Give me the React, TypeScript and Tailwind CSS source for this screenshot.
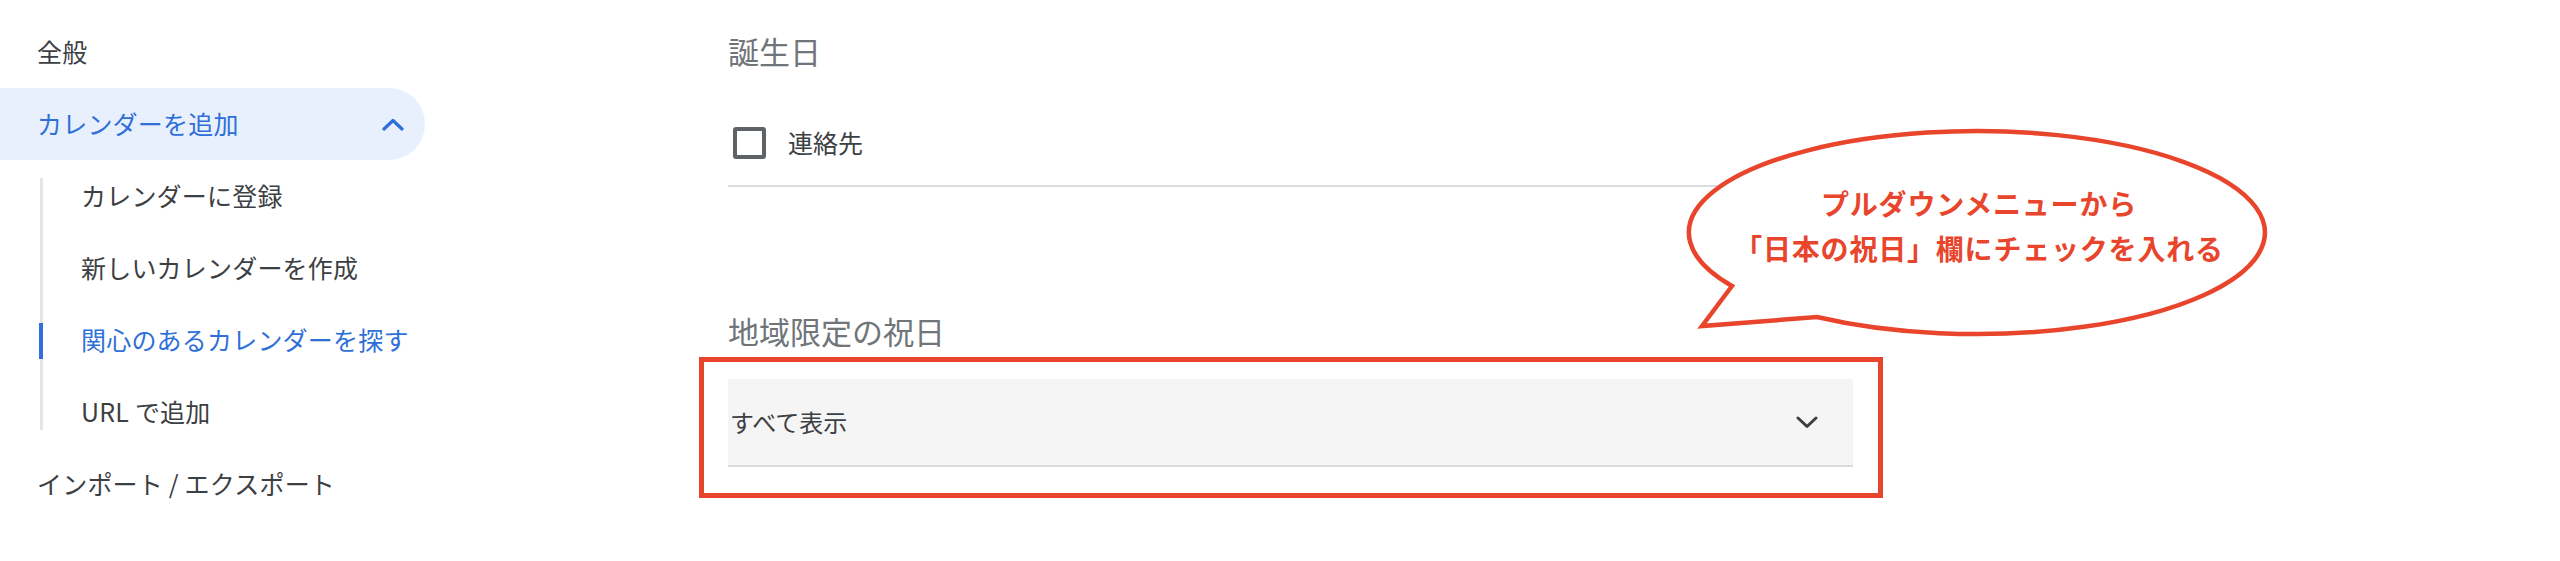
import React from "react";

const FONT = { fontFamily: '"Noto Sans CJK JP", "Noto Sans", Roboto, sans-serif' };

function ChevronUp() {
  return (
    <svg width="22" height="13" viewBox="0 0 22 13" fill="none">
      <path d="M2 11 L11 2.5 L20 11" stroke="#2f6fd8" strokeWidth="3.2" strokeLinecap="round" strokeLinejoin="round" />
    </svg>
  );
}

function ChevronDown() {
  return (
    <svg width="22" height="13" viewBox="0 0 22 13" fill="none">
      <path d="M2 2 L11 10.5 L20 2" stroke="#3c4043" strokeWidth="3" strokeLinecap="round" strokeLinejoin="round" />
    </svg>
  );
}

function Sidebar() {
  const sub = [
    { label: "カレンダーに登録", active: false },
    { label: "新しいカレンダーを作成", active: false },
    { label: "関心のあるカレンダーを探す", active: true },
    { label: "URL で追加", active: false },
  ];
  return (
    <div className="w-[425px] shrink-0 pt-[16px] text-[25px] text-[#3c4043] tracking-[0.2px]">
      <div className="h-[72px] pl-[37px] flex items-center">全般</div>
      <div className="h-[72px] pl-[37px] pr-[21px] flex items-center justify-between rounded-r-full bg-[#e8f0fe] text-[#2f6fd8]">
        <span>カレンダーを追加</span>
        <ChevronUp />
      </div>
      <div className="relative">
        <div className="absolute left-[40px] top-[18px] bottom-[18px] w-[3px] bg-[#e3e5e9]" />
        {sub.map((s) => (
          <div
            key={s.label}
            className={
              "relative h-[72px] pl-[81px] flex items-center " +
              (s.active ? "text-[#2f6fd8]" : "")
            }
          >
            {s.active && (
              <div className="absolute left-[39px] top-[19px] h-[36px] w-[4px] bg-[#2f6fd8]" />
            )}
            {s.label}
          </div>
        ))}
      </div>
      <div className="h-[72px] pl-[37px] flex items-center">インポート / エクスポート</div>
    </div>
  );
}

function Main() {
  return (
    <div className="flex-1 pl-[303px] pt-[31px]">
      <div className="w-[1125px]">
        <div className="h-[40px] leading-[40px] text-[31px] text-[#70757a]">誕生日</div>
        <div className="mt-[36px] h-[72px] flex items-center pl-[5px]">
          <div className="w-[33px] h-[32px] border-[4px] border-[#5f6368] rounded-[3px]" />
          <span className="ml-[22px] text-[25px] text-[#3c4043]">連絡先</span>
        </div>
        <div className="mt-[6px] h-[2px] bg-[#dadce0]" />
        <div className="mt-[124px] h-[40px] leading-[40px] text-[31px] text-[#70757a]">地域限定の祝日</div>
        <div className="relative mt-[28px]">
          <div className="h-[88px] bg-[#f5f5f5] border-b-[2px] border-[#dadce0] flex items-center justify-between pl-[2px] pr-[35px]">
            <span className="text-[24px] text-[#3c4043]">すべて表示</span>
            <ChevronDown />
          </div>
          <div className="absolute left-[-29px] top-[-22px] right-[-30px] bottom-[-31px] border-[5px] border-[#e8452c] pointer-events-none" />
        </div>
      </div>
    </div>
  );
}

function Bubble() {
  return (
    <>
      <svg
        className="absolute left-0 top-0 pointer-events-none"
        width="2560"
        height="561"
        viewBox="0 0 2560 561"
      >
        <path
          d="M1732 286 L1702 326 L1817 317 A288 101.5 0 1 0 1732 286 Z"
          fill="#ffffff"
          stroke="#e8452c"
          strokeWidth="4.5"
          strokeLinejoin="miter"
        />
      </svg>
      <div className="absolute left-[1679px] top-[181px] w-[600px] text-center text-[28px] leading-[45px] font-bold text-[#e8452c] tracking-[0.8px]">
        <div>プルダウンメニューから</div>
        <div>「日本の祝日」欄にチェックを入れる</div>
      </div>
    </>
  );
}

export default function App() {
  return (
    <div className="relative w-[2560px] h-[561px] bg-white overflow-hidden" style={FONT}>
      <div className="flex">
        <Sidebar />
        <Main />
      </div>
      <Bubble />
    </div>
  );
}
